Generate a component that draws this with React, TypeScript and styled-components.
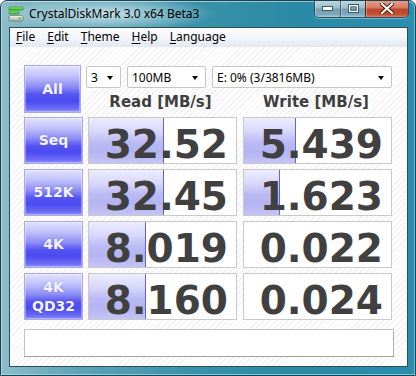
import React from "react";
import styled, { createGlobalStyle } from "styled-components";

const GlobalStyle = createGlobalStyle`
  html, body { margin: 0; padding: 0; background: #ffffff; }
  #root { width: 416px; height: 376px; }
`;

const UI = `"Noto Sans", "Open Sans", sans-serif`;
const BOLD = `"DejaVu Sans", Verdana, sans-serif`;

const Window = styled.div`
  box-sizing: border-box;
  width: 416px;
  height: 376px;
  display: flex;
  flex-direction: column;
  padding: 0 7px 8px 8px;
  border: 1px solid #1d4250;
  border-radius: 7px 7px 0 0;
  background:
    radial-gradient(ellipse 110px 18px at 105px 13px, rgba(235, 248, 250, 0.75), rgba(235, 248, 250, 0) 100%),
    linear-gradient(to right, #8dbdca 0%, #5ea3b6 18%, #3a93aa 45%, #2b8aa4 70%, #2a8db0 100%);
  box-shadow: inset 0 1px 0 rgba(255,255,255,0.5), inset 1px 0 0 rgba(255,255,255,0.3), inset -1px 0 0 rgba(140,220,240,0.6), inset 0 -1px 0 rgba(150,230,250,0.7);
  overflow: hidden;
`;

const TitleBar = styled.div`
  height: 26px;
  display: flex;
  align-items: flex-start;
  margin-left: -1px;
  margin-right: -7px;
`;

const AppIcon = styled.svg`
  width: 16px;
  height: 16px;
  margin-top: 5px;
  flex: none;
`;

const Title = styled.div`
  margin-left: 5px;
  margin-top: 4px;
  font-family: ${UI};
  font-size: 12px;
  color: #000;
  white-space: nowrap;
`;

const Caption = styled.div`
  margin-left: auto;
  margin-right: 6px;
  margin-top: -1px;
  display: flex;
  border: 1px solid #2f4f5c;
  border-top: none;
  border-radius: 0 0 5px 5px;
  overflow: hidden;
  height: 17px;
  box-shadow: 0 1px 0 rgba(255,255,255,0.35);
`;

const CapButton = styled.div<{ $w: number; $close?: boolean }>`
  width: ${(p) => p.$w}px;
  height: 17px;
  display: flex;
  align-items: center;
  justify-content: center;
  box-sizing: border-box;
  border-left: 1px solid ${(p) => (p.$close ? "#5a2a20" : "#3e6676")};
  &:first-child { border-left: none; }
  background: ${(p) =>
    p.$close
      ? "linear-gradient(to bottom, #e9a393 0%, #d77a64 45%, #c2442a 55%, #c4502f 85%, #d9826a 100%)"
      : "linear-gradient(to bottom, #c4dbe3 0%, #9dbdcb 45%, #77a0b2 55%, #7ca8b9 85%, #a5ccd9 100%)"};
  box-shadow: inset 0 1px 0 rgba(255,255,255,0.6), inset 1px 0 0 rgba(255,255,255,0.3);
`;

const Client = styled.div`
  flex: 1;
  display: flex;
  flex-direction: column;
  border: 1px solid #2a4e5c;
  background: #ffffff;
  min-height: 0;
`;

const MenuBar = styled.div`
  height: 18px;
  display: flex;
  align-items: center;
  background: linear-gradient(to bottom, #fbfcfe 0%, #f3f6fb 50%, #e3e9f3 100%);
  border-bottom: 1px solid #e6eaf0;
`;

const MenuItem = styled.span`
  font-family: ${UI};
  font-size: 12px;
  color: #000;
  padding: 0 6px 0 6px;
  line-height: 18px;
  & u { text-decoration: underline; text-underline-offset: 2px; }
`;

const Content = styled.div`
  flex: 1;
  display: flex;
  flex-direction: column;
  padding: 18px 15px 0 14px;
  background: repeating-linear-gradient(135deg, #ffffff 0px, #ffffff 3px, #f1f1f1 3px, #f1f1f1 4.2px);
`;

const TopRow = styled.div`
  display: flex;
  gap: 5px;
  height: 48px;
`;

const Controls = styled.div`
  display: flex;
  flex-direction: column;
  padding-top: 1px;
`;

const SelectRow = styled.div`
  display: flex;
  gap: 6px;
`;

const Select = styled.div<{ $w: number }>`
  box-sizing: border-box;
  width: ${(p) => p.$w}px;
  height: 22px;
  display: flex;
  align-items: center;
  justify-content: space-between;
  padding: 0 7px 0 4px;
  background: #ffffff;
  border: 1px solid #c6c6c6;
  border-radius: 2px;
  font-family: ${UI};
  font-size: 12px;
  color: #000;
`;

const Arrow = styled.span`
  width: 0;
  height: 0;
  border-left: 3.5px solid transparent;
  border-right: 3.5px solid transparent;
  border-top: 4px solid #000;
  margin-top: 1px;
`;

const Headers = styled.div`
  display: grid;
  grid-template-columns: 149px 150px;
  column-gap: 6px;
  margin-top: 4px;
`;

const Header = styled.div`
  text-align: center;
  font-family: ${BOLD};
  font-weight: bold;
  font-size: 15px;
  line-height: 20px;
  color: #3f3f3f;
`;

const Grid = styled.div`
  display: grid;
  grid-template-columns: 59px 149px 150px;
  grid-auto-rows: 47px;
  column-gap: 5px;
  row-gap: 5px;
  margin-top: 4px;
  & > :nth-child(3n) { margin-left: 1px; }
`;

const TestButton = styled.div<{ $big?: boolean }>`
  box-sizing: border-box;
  height: ${(p) => (p.$big ? "48px" : "47px")};
  width: 59px;
  display: flex;
  flex-direction: column;
  align-items: center;
  justify-content: center;
  border: 1px solid #a9a9ea;
  background: linear-gradient(to bottom, #e2e2ff 0%, #c2c2fb 22%, #8d8df6 45%, #5454f2 62%, #4a4af0 76%, #6a6af6 92%, #8e8efa 100%);
  box-shadow: inset 0 0 0 1px rgba(255,255,255,0.35);
  font-family: ${BOLD};
  font-weight: bold;
  font-size: 14px;
  line-height: 19px;
  color: #f4f4ff;
  text-shadow: 0 0 1px rgba(60,60,200,0.5);
`;

const Cell = styled.div`
  box-sizing: border-box;
  height: 47px;
  border: 1px solid #c9c9c9;
  background-color: #ffffff;
  background-image:
    linear-gradient(#6565c9, #6565c9),
    linear-gradient(to bottom, #ededfd 0%, #d7d7fa 30%, #b9b9f3 55%, #b4b4f2 75%, #c4c4f5 100%);
  background-repeat: no-repeat;
  background-size: var(--edge) 100%, var(--bar) 100%;
  background-position: var(--bar) 0, 0 0;
  display: flex;
  justify-content: flex-end;
  align-items: flex-start;
  padding: 7px 8px 0 0;
  font-family: ${BOLD};
  font-weight: bold;
  font-size: 39px;
  line-height: 39px;
  color: #404040;
`;

const Status = styled.div`
  box-sizing: border-box;
  margin-top: 9px;
  width: 370px;
  height: 28px;
  background: #ffffff;
  border: 1px solid #c4c4c4;
  border-bottom-color: #a0a0a0;
  border-right-color: #b0b0b0;
`;

type Row = { label: string[]; read: string; rb: number; write: string; wb: number };

const rows: Row[] = [
  { label: ["Seq"], read: "32.52", rb: 74, write: "5.439", wb: 51 },
  { label: ["512K"], read: "32.45", rb: 74, write: "1.623", wb: 35 },
  { label: ["4K"], read: "8.019", rb: 56, write: "0.022", wb: 0 },
  { label: ["4K", "QD32"], read: "8.160", rb: 56, write: "0.024", wb: 0 },
];

const barStyle = (w: number) =>
  ({
    ["--bar" as string]: `${w}px`,
    ["--edge" as string]: w > 0 ? "1px" : "0px",
  } as React.CSSProperties);

const Menu = ({ k, rest }: { k: string; rest: string }) => (
  <MenuItem>
    <u>{k}</u>
    {rest}
  </MenuItem>
);

export default function App() {
  return (
    <>
      <GlobalStyle />
      <Window>
        <TitleBar>
          <AppIcon viewBox="0 0 16 16">
            <defs>
              <linearGradient id="g1" x1="0" y1="0" x2="0" y2="1">
                <stop offset="0" stopColor="#9af07a" />
                <stop offset="1" stopColor="#2fb52a" />
              </linearGradient>
              <linearGradient id="g2" x1="0" y1="0" x2="0" y2="1">
                <stop offset="0" stopColor="#f8f8f8" />
                <stop offset="1" stopColor="#a8a8a8" />
              </linearGradient>
            </defs>
            <rect x="1" y="1" width="14" height="3" rx="0.5" fill="url(#g1)" stroke="#2a8a20" strokeWidth="0.6" />
            <rect x="1" y="5" width="10" height="3" rx="0.5" fill="url(#g1)" stroke="#2a8a20" strokeWidth="0.6" />
            <rect x="1" y="9.5" width="14" height="5.5" rx="1.5" fill="url(#g2)" stroke="#6a6a6a" strokeWidth="0.7" />
            <rect x="10.5" y="11.5" width="2.5" height="1.6" fill="#39c02c" />
          </AppIcon>
          <Title>CrystalDiskMark 3.0 x64 Beta3</Title>
          <Caption>
            <CapButton $w={25}>
              <svg width="11" height="5" viewBox="0 0 11 5">
                <rect x="0.5" y="0.5" width="10" height="4" fill="#fff" stroke="#3c5e6a" />
              </svg>
            </CapButton>
            <CapButton $w={25}>
              <svg width="11" height="9" viewBox="0 0 11 9">
                <rect x="0.5" y="0.5" width="10" height="8" fill="none" stroke="#3c5e6a" />
                <rect x="1.5" y="1.5" width="8" height="6" fill="none" stroke="#fff" />
                <rect x="3" y="3" width="5" height="3" fill="none" stroke="#3c5e6a" strokeWidth="0.8" />
              </svg>
            </CapButton>
            <CapButton $w={43} $close>
              <svg width="14" height="11" viewBox="0 0 14 11">
                <path d="M2 1 L12 10 M12 1 L2 10" stroke="#4a1a10" strokeWidth="4" strokeLinecap="square" />
                <path d="M2 1 L12 10 M12 1 L2 10" stroke="#ffffff" strokeWidth="2.2" strokeLinecap="square" />
              </svg>
            </CapButton>
          </Caption>
        </TitleBar>
        <Client>
          <MenuBar>
            <Menu k="F" rest="ile" />
            <Menu k="E" rest="dit" />
            <Menu k="T" rest="heme" />
            <Menu k="H" rest="elp" />
            <Menu k="L" rest="anguage" />
          </MenuBar>
          <Content>
            <TopRow>
              <TestButton $big>All</TestButton>
              <Controls>
                <SelectRow>
                  <Select $w={35}>
                    <span>3</span>
                    <Arrow />
                  </Select>
                  <Select $w={79}>
                    <span>100MB</span>
                    <Arrow />
                  </Select>
                  <Select $w={180}>
                    <span>E: 0% (3/3816MB)</span>
                    <Arrow />
                  </Select>
                </SelectRow>
                <Headers>
                  <Header>Read [MB/s]</Header>
                  <Header>Write [MB/s]</Header>
                </Headers>
              </Controls>
            </TopRow>
            <Grid>
              {rows.map((r) => (
                <React.Fragment key={r.label.join("-")}>
                  <TestButton>
                    {r.label.map((l) => (
                      <span key={l}>{l}</span>
                    ))}
                  </TestButton>
                  <Cell style={barStyle(r.rb)}>{r.read}</Cell>
                  <Cell style={barStyle(r.wb)}>{r.write}</Cell>
                </React.Fragment>
              ))}
            </Grid>
            <Status />
          </Content>
        </Client>
      </Window>
    </>
  );
}
